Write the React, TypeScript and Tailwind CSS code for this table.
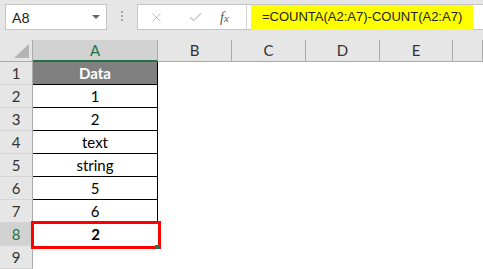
import { X, Check } from "lucide-react"

const font = { fontFamily: "Lato, 'Liberation Sans', sans-serif" }

const rows = [
  { n: 1, v: "Data", head: true },
  { n: 2, v: "1" },
  { n: 3, v: "2" },
  { n: 4, v: "text" },
  { n: 5, v: "string" },
  { n: 6, v: "5" },
  { n: 7, v: "6" },
  { n: 8, v: "2", result: true },
  { n: 9, v: "" },
]

const cols = ["B", "C", "D", "E", ""]

function Toolbar() {
  return (
    <div className="flex h-[40px] items-start bg-[#e6e6e6] pt-[4px]">
      <div className="ml-[5px] flex h-[26px] w-[102px] items-center justify-between border border-[#c6c6c6] bg-white pl-[6px] pr-[6px]">
        <span className="text-[14px] text-[#222]">A8</span>
        <svg width="8" height="5" viewBox="0 0 8 5">
          <path d="M0 0h8L4 4z" fill="#666" />
        </svg>
      </div>
      <div className="flex w-[30px] flex-col items-center gap-[2px] pt-[7px]">
        <span className="h-[2px] w-[2px] bg-[#a8a8a8]" />
        <span className="h-[2px] w-[2px] bg-[#a8a8a8]" />
        <span className="h-[2px] w-[2px] bg-[#a8a8a8]" />
      </div>
      <div className="flex h-[26px] flex-1 items-center border border-r-0 border-[#c6c6c6] bg-white">
        <div className="flex h-full w-[109px] items-center border-r border-[#d4d4d4]">
          <X className="ml-[11px] h-[15px] w-[15px] text-[#c2c2c2]" strokeWidth={1.6} />
          <Check className="ml-[24px] h-[15px] w-[15px] text-[#c2c2c2]" strokeWidth={1.8} />
          <span
            className="ml-[17px] text-[14px] italic text-[#555]"
            style={{ fontFamily: "'Liberation Serif', serif" }}
          >
            f<span className="text-[11px]">x</span>
          </span>
        </div>
        <div className="ml-[4px] flex h-[25px] w-[222px] items-center bg-[#ffff00] pl-[11px]">
          <span
            className="whitespace-nowrap text-[13px] text-[#222]"
            style={{ fontFamily: "'Liberation Sans', sans-serif" }}
          >
            =COUNTA(A2:A7)-COUNT(A2:A7)
          </span>
        </div>
      </div>
    </div>
  )
}

function Sheet() {
  return (
    <div className="relative grid grid-cols-[33px_125px_74px_74px_74px_73px_1fr] grid-rows-[22px_repeat(9,23px)]">
      <div className="flex items-end justify-end border-r border-b border-[#ababab] bg-[#e6e6e6] pb-[3px] pr-[3px]">
        <svg width="15" height="14" viewBox="0 0 15 14">
          <path d="M15 0V14H0z" fill="#b4b4b4" />
        </svg>
      </div>
      <div className="flex items-center justify-center border-r border-[#ababab] border-b-2 border-b-[#217346] bg-[#d2d2d2] text-[15px] text-[#217346]">
        A
      </div>
      {cols.map((c, i) => (
        <div
          key={i}
          className="flex items-center justify-center border-r border-b border-[#ababab] bg-[#e6e6e6] text-[15px] text-[#333]"
        >
          {c}
        </div>
      ))}
      {rows.map((r) => (
        <Row key={r.n} {...r} />
      ))}
      <div className="pointer-events-none absolute left-[31px] top-[181px] h-[28px] w-[130px] border-[3px] border-[#ff0000]" />
      <div className="absolute left-[155px] top-[205px] h-[4px] w-[5px] bg-[#217346]" />
    </div>
  )
}

function Row({ n, v, head, result }: { n: number; v: string; head?: boolean; result?: boolean }) {
  const inTable = n <= 7
  return (
    <>
      <div
        className={`flex items-center justify-center border-r border-b border-r-[#ababab] border-b-[#d4d4d4] text-[15px] ${
          result ? "bg-[#d2d2d2] text-[#217346]" : "bg-[#e6e6e6] text-[#333]"
        }`}
      >
        {n}
      </div>
      <div
        className={`flex items-center justify-center text-[15px] ${
          inTable ? "border-r border-b border-black" : ""
        } ${head ? "bg-[#808080] font-bold text-white" : "bg-white text-black"} ${result ? "font-bold" : ""}`}
      >
        {v}
      </div>
      <div className="bg-white" />
      <div className="bg-white" />
      <div className="bg-white" />
      <div className="bg-white" />
      <div className="bg-white" />
    </>
  )
}

export default function App() {
  return (
    <div className="h-[269px] w-[483px] overflow-hidden bg-white" style={font}>
      <Toolbar />
      <Sheet />
    </div>
  )
}
